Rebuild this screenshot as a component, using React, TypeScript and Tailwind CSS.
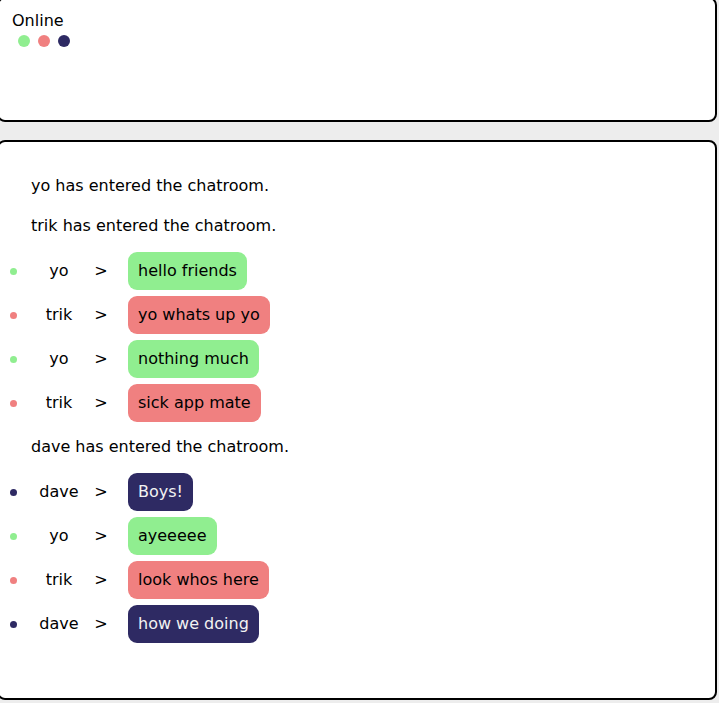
import React from "react";

type Item =
  | { kind: "join"; user: string }
  | { kind: "msg"; user: string; text: string };

const users: Record<string, { dot: string; bubble: string }> = {
  yo: { dot: "bg-[#90ee90]", bubble: "bg-[#90ee90] text-black" },
  trik: { dot: "bg-[#f08080]", bubble: "bg-[#f08080] text-black" },
  dave: { dot: "bg-[#2e2a63]", bubble: "bg-[#2e2a63] text-[#f2f2f2]" },
};

const feed: Item[] = [
  { kind: "join", user: "yo" },
  { kind: "join", user: "trik" },
  { kind: "msg", user: "yo", text: "hello friends" },
  { kind: "msg", user: "trik", text: "yo whats up yo" },
  { kind: "msg", user: "yo", text: "nothing much" },
  { kind: "msg", user: "trik", text: "sick app mate" },
  { kind: "join", user: "dave" },
  { kind: "msg", user: "dave", text: "Boys!" },
  { kind: "msg", user: "yo", text: "ayeeeee" },
  { kind: "msg", user: "trik", text: "look whos here" },
  { kind: "msg", user: "dave", text: "how we doing" },
];

function JoinLine({ user, after }: { user: string; after: boolean }) {
  return (
    <div className={`flex h-10 items-center pl-[32px] ${after ? "mt-[2px]" : ""}`}>
      {user} has entered the chatroom.
    </div>
  );
}

function MessageRow({ user, text, first }: { user: string; text: string; first: boolean }) {
  const u = users[user];
  return (
    <div className={`flex h-11 items-center pl-[11px] ${first ? "mt-[3px]" : ""}`}>
      <span className={`h-[7px] w-[7px] shrink-0 rounded-full ${u.dot}`} />
      <span className="ml-[10px] w-16 text-center">{user}</span>
      <span className="w-5 text-center">&gt;</span>
      <span className={`ml-[17px] flex h-[38px] items-center rounded-[9px] px-[10px] ${u.bubble}`}>
        {text}
      </span>
    </div>
  );
}

export default function App() {
  return (
    <div
      className="h-[703px] w-[719px] overflow-hidden bg-[#ededed] text-[16px] text-black"
      style={{ fontFamily: '"DejaVu Sans", sans-serif' }}
    >
      <div className="-ml-[3px] -mt-[3px] flex w-[720px] flex-col">
        <div className="h-[125px] rounded-lg border-2 border-black bg-white pl-[13px] pt-[10px]">
          <div>Online</div>
          <div className="ml-[6px] mt-[2px] flex gap-2">
            <span className="h-3 w-3 rounded-full bg-[#90ee90]" />
            <span className="h-3 w-3 rounded-full bg-[#f08080]" />
            <span className="h-3 w-3 rounded-full bg-[#2e2a63]" />
          </div>
        </div>

        <div className="mt-[18px] h-[560px] rounded-lg border-2 border-black bg-white pt-[24px]">
          {feed.map((item, i) => {
            const prev = feed[i - 1];
            if (item.kind === "join") {
              return <JoinLine key={i} user={item.user} after={prev?.kind === "msg"} />;
            }
            return (
              <MessageRow key={i} user={item.user} text={item.text} first={prev?.kind === "join"} />
            );
          })}
        </div>
      </div>
    </div>
  );
}
